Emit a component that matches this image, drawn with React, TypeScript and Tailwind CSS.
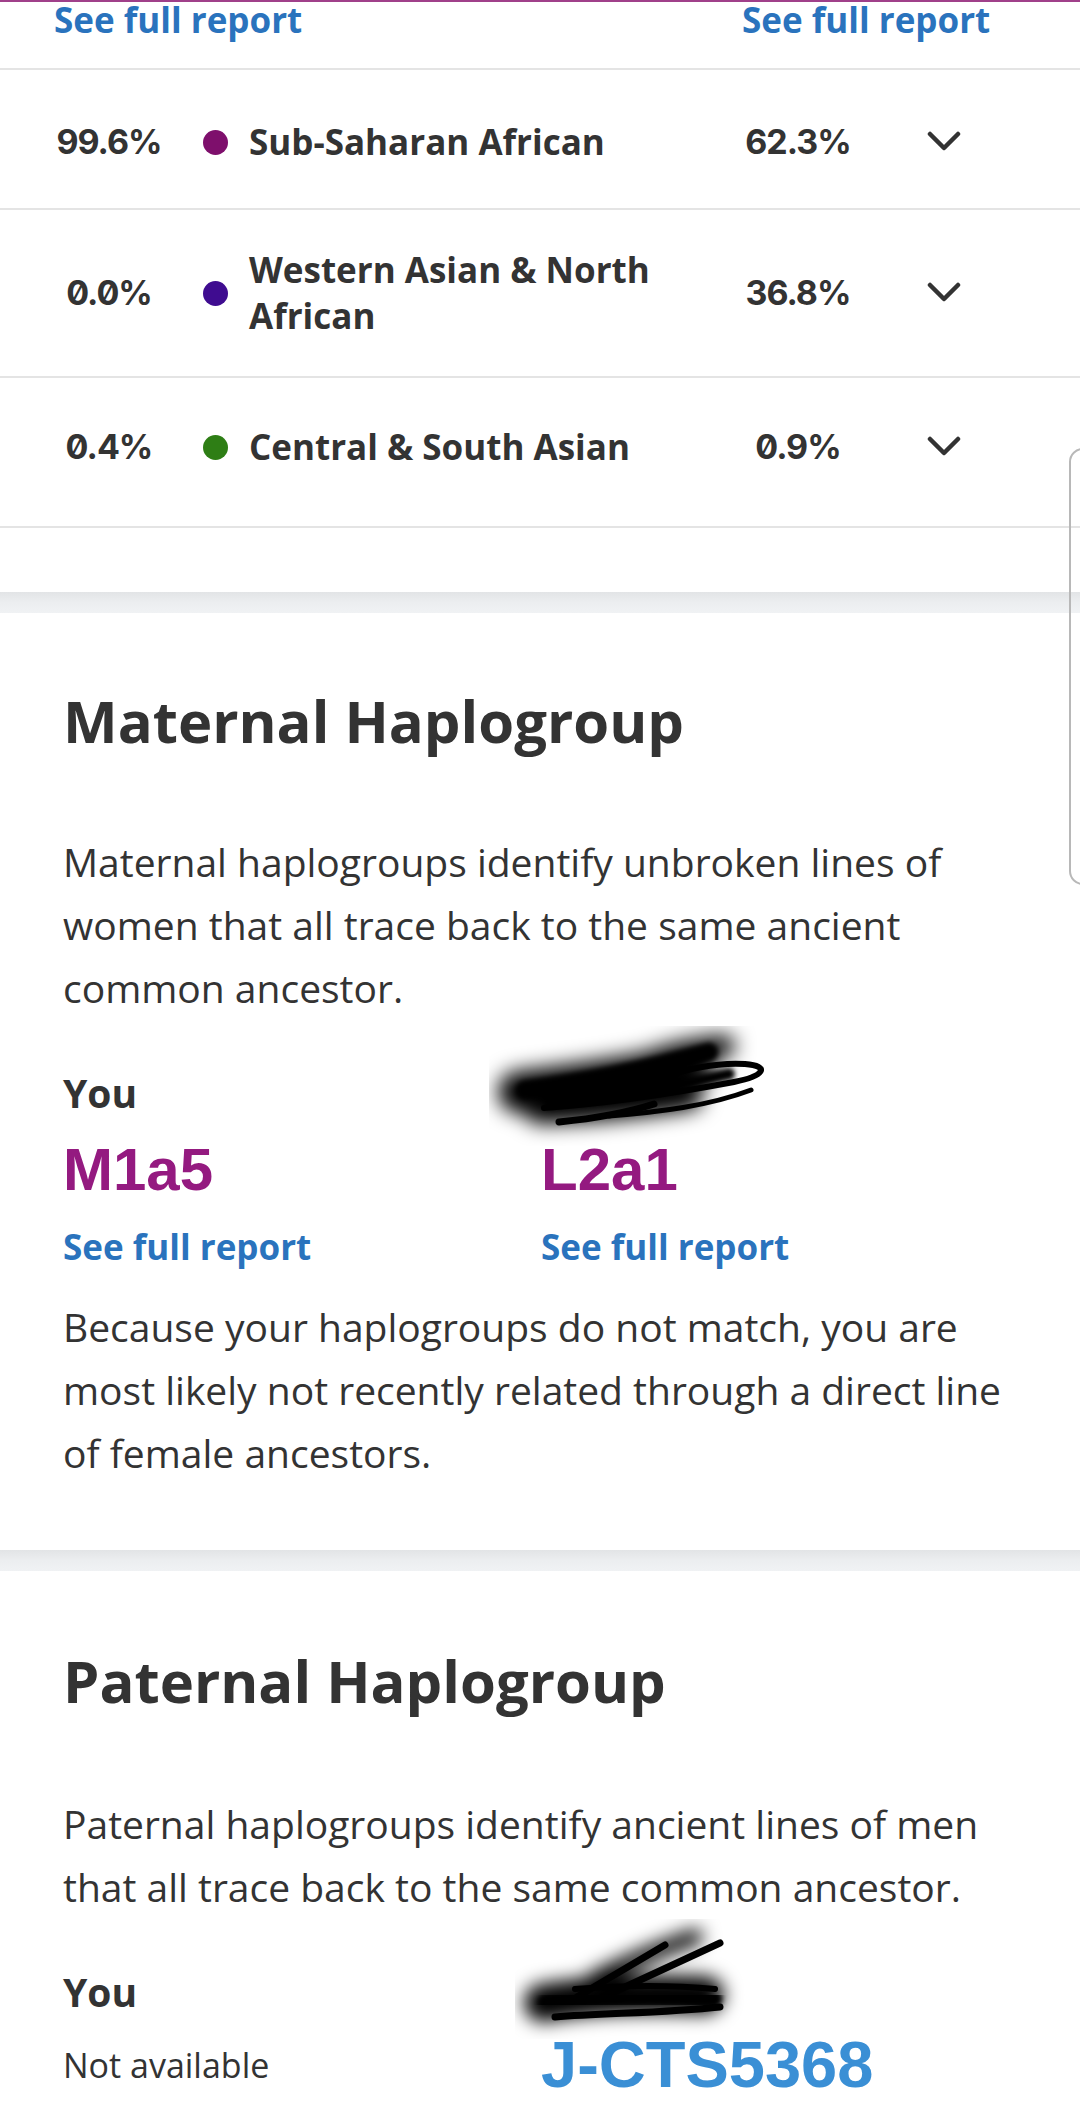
import React from "react";

const font = "font-['Open_Sans',sans-serif]";

function Chevron() {
  return (
    <svg width="34" height="22" viewBox="0 0 34 22" className="shrink-0">
      <polyline points="3,3 17,17 31,3" fill="none" stroke="#333333" strokeWidth="4.5" strokeLinecap="round" strokeLinejoin="round" />
    </svg>
  );
}

function Row({
  left,
  dot,
  name,
  right,
  box,
}: {
  left: string;
  dot: string;
  name: React.ReactNode;
  right: string;
  box: string;
}) {
  return (
    <div className={`flex items-center border-b-2 border-[#e4e4e4] pl-[54px] ${box}`}>
      <div className="w-[110px] shrink-0 text-center font-['Inter',sans-serif] text-[34px] font-bold leading-[46px] tracking-[-1px] text-[#333333] slashed-zero">{left}</div>
      <div className={`ml-[39px] h-[25px] w-[25px] shrink-0 rounded-full ${dot}`} />
      <div className="ml-[21px] w-[470px] shrink-0 text-[35px] font-bold leading-[46px] text-[#333333]">{name}</div>
      <div className="ml-[20px] w-[118px] shrink-0 text-center font-['Inter',sans-serif] text-[34px] font-bold leading-[46px] tracking-[-1px] text-[#333333] slashed-zero">{right}</div>
      <div className="ml-[70px]">
        <Chevron />
      </div>
    </div>
  );
}

function BlobA() {
  return (
    <svg width="300" height="120" viewBox="0 0 300 120" className="pointer-events-none absolute left-[-52px] top-[-42px]">
      <defs>
        <filter id="blurA" x="-30%" y="-60%" width="160%" height="220%">
          <feGaussianBlur stdDeviation="10" />
        </filter>
        <filter id="blurA2" x="-10%" y="-30%" width="120%" height="160%">
          <feGaussianBlur stdDeviation="2.5" />
        </filter>
      </defs>
      <g filter="url(#blurA)" fill="none" stroke="#000" strokeLinecap="round">
        <path d="M30 66 C 80 60, 140 52, 205 38" strokeWidth="42" />
        <path d="M50 84 C 100 84, 150 78, 200 70" strokeWidth="28" />
        <path d="M150 40 C 180 28, 205 22, 235 20" strokeWidth="22" />
      </g>
      <g filter="url(#blurA2)" fill="none" stroke="#000" strokeLinecap="round">
        <path d="M36 64 C 90 56, 150 46, 220 26" strokeWidth="18" />
        <path d="M60 76 C 120 70, 180 62, 240 48" strokeWidth="12" />
      </g>
      <g fill="none" stroke="#000" strokeLinecap="round">
        <path d="M55 82 C 110 78, 170 70, 245 56 C 275 50, 282 40, 256 38 C 226 36, 196 44, 170 52" strokeWidth="6" />
        <path d="M70 96 C 110 92, 140 86, 165 78" strokeWidth="7" />
        <path d="M120 90 C 170 86, 220 80, 262 64" strokeWidth="5" />
      </g>
    </svg>
  );
}

function BlobB() {
  return (
    <svg width="240" height="120" viewBox="0 0 240 120" className="pointer-events-none absolute left-[-26px] top-[-48px]">
      <defs>
        <filter id="blurB" x="-30%" y="-60%" width="160%" height="220%">
          <feGaussianBlur stdDeviation="9" />
        </filter>
        <filter id="blurB2" x="-10%" y="-30%" width="120%" height="160%">
          <feGaussianBlur stdDeviation="2.5" />
        </filter>
      </defs>
      <g filter="url(#blurB)" fill="none" stroke="#000" strokeLinecap="round">
        <path d="M28 84 C 70 76, 130 74, 190 76" strokeWidth="38" />
        <path d="M80 60 C 115 42, 150 28, 180 18" strokeWidth="16" />
      </g>
      <g filter="url(#blurB2)" fill="none" stroke="#000" strokeLinecap="round">
        <path d="M32 84 C 80 78, 140 76, 198 80" strokeWidth="18" />
      </g>
      <g fill="none" stroke="#000" strokeLinecap="round">
        <path d="M62 78 L 150 26" strokeWidth="7" />
        <path d="M84 80 L 205 24" strokeWidth="7" />
        <path d="M40 98 C 90 94, 150 94, 205 88" strokeWidth="7" />
        <path d="M60 70 C 110 66, 160 66, 200 70" strokeWidth="6" />
      </g>
    </svg>
  );
}

function Band() {
  return <div className="h-[21px] bg-gradient-to-b from-[#e2e4e6] via-[#eceef0] to-[#f0f2f4]" />;
}

export default function App() {
  return (
    <div className={`relative w-[1080px] overflow-hidden bg-white ${font}`}>
      <div className="h-[2px] bg-[#a0408a]" />

      {/* top links */}
      <div className="flex h-[68px] border-b-2 border-[#e4e4e4] pl-[54px]">
        <div className="-mt-[5px] w-[688px] text-[35px] font-bold leading-[46px] text-[#2a73bd]">See full report</div>
        <div className="-mt-[5px] text-[35px] font-bold leading-[46px] text-[#2a73bd]">See full report</div>
      </div>

      <Row box="h-[140px] pt-[6px]" left="99.6%" dot="bg-[#7e0f6c]" name="Sub-Saharan African" right="62.3%" />
      <Row
        box="h-[168px]"
        left="0.0%"
        dot="bg-[#3f0c90]"
        name={
          <>
            Western Asian &amp; North
            <br />
            African
          </>
        }
        right="36.8%"
      />
      <Row box="h-[150px] pb-[10px]" left="0.4%" dot="bg-[#2e7e15]" name="Central & South Asian" right="0.9%" />

      <div className="h-[64px]" />
      <Band />

      {/* Maternal */}
      <section className="pl-[63px] pr-[40px] pt-[76px] pb-[66px] text-[#333333]">
        <h2 className="text-[58px] font-bold leading-[64px]">Maternal Haplogroup</h2>
        <p className="mt-[77px] text-[39px] leading-[63px]">
          Maternal haplogroups identify unbroken lines of women that all trace back to the same ancient common ancestor.
        </p>
        <div className="mt-[49px] grid grid-cols-[478px_1fr]">
          <div className="text-[39px] font-bold leading-[50px]">You</div>
          <div className="relative h-[50px]">
            <BlobA />
          </div>
          <div className="mt-[17px] font-['Liberation_Sans',Arial,sans-serif] text-[60px] font-bold leading-[70px] text-[#941a80]">M1a5</div>
          <div className="mt-[17px] font-['Liberation_Sans',Arial,sans-serif] text-[60px] font-bold leading-[70px] text-[#941a80]">L2a1</div>
          <div className="mt-[19px] text-[35px] font-bold leading-[46px] text-[#2a73bd]">See full report</div>
          <div className="mt-[19px] text-[35px] font-bold leading-[46px] text-[#2a73bd]">See full report</div>
        </div>
        <p className="mt-[25px] text-[39px] leading-[63px]">
          Because your haplogroups do not match, you are most likely not recently related through a direct line of female ancestors.
        </p>
      </section>

      <Band />

      {/* Paternal */}
      <section className="pl-[63px] pr-[40px] pt-[78px] pb-[60px] text-[#333333]">
        <h2 className="text-[58px] font-bold leading-[64px]">Paternal Haplogroup</h2>
        <p className="mt-[79px] text-[39px] leading-[63px]">
          Paternal haplogroups identify ancient lines of men that all trace back to the same common ancestor.
        </p>
        <div className="mt-[49px] grid grid-cols-[478px_1fr] items-start">
          <div className="text-[39px] font-bold leading-[50px]">You</div>
          <div className="relative h-[50px]">
            <BlobB />
          </div>
          <div className="mt-[25px] text-[34px] leading-[46px]">Not available</div>
          <div className="mt-[12px] font-['Liberation_Sans',Arial,sans-serif] text-[65px] font-bold leading-[72px] text-[#3a8fd5]">J-CTS5368</div>
        </div>
      </section>

      {/* side tab outline */}
      <div className="pointer-events-none absolute left-[1069px] top-[448px] h-[437px] w-[40px] rounded-[14px] border-2 border-[#b8b8b8]" />
    </div>
  );
}
